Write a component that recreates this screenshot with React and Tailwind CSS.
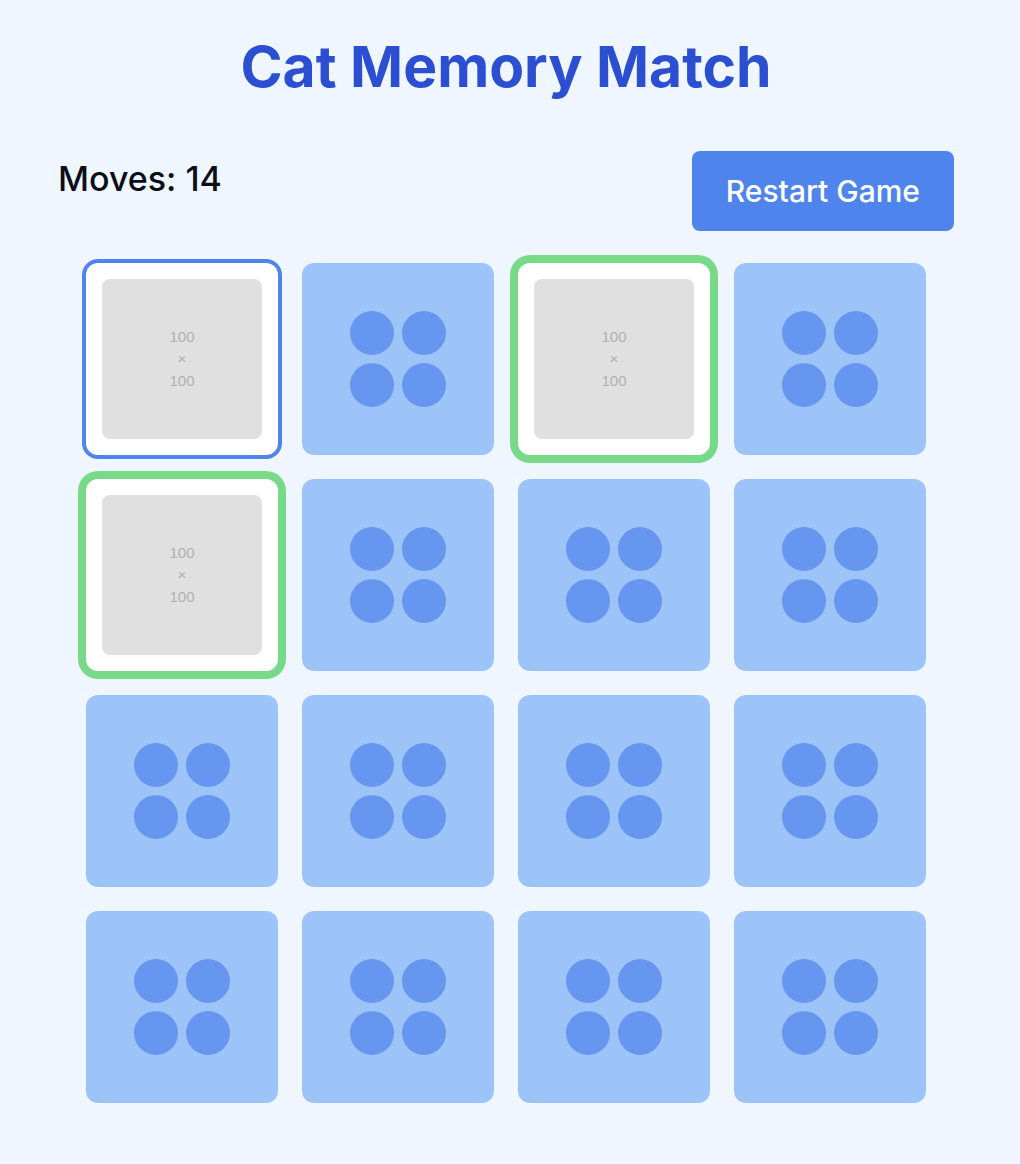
import React from 'react'

const cards = [
  'selected', 'hidden', 'matched', 'hidden',
  'matched', 'hidden', 'hidden', 'hidden',
  'hidden', 'hidden', 'hidden', 'hidden',
  'hidden', 'hidden', 'hidden', 'hidden',
]

function CardBack() {
  return (
    <div className="w-48 h-48 rounded-xl bg-[#9dc4f8] flex items-center justify-center">
      <div className="grid grid-cols-2 gap-2">
        {[0, 1, 2, 3].map((i) => (
          <div key={i} className="w-11 h-11 rounded-full bg-[#6696f0]"></div>
        ))}
      </div>
    </div>
  )
}

function CardFront({ state }) {
  const ring = state === 'matched' ? 'ring-8 ring-[#78da88]' : 'ring-4 ring-[#4f84ec]'
  return (
    <div className={'w-48 h-48 rounded-xl bg-white p-4 ' + ring}>
      <div className="w-40 h-40 rounded-lg bg-[#e0e0e0] flex flex-col items-center justify-center text-[15px] leading-[22px] text-[#b0b0b0] font-['Liberation_Sans',sans-serif]">
        <span>100</span>
        <span>×</span>
        <span>100</span>
      </div>
    </div>
  )
}

export default function App() {
  return (
    <div className="min-h-screen bg-[#eff6ff] pr-2 font-['Inter',sans-serif]">
      <div className="mx-auto max-w-[896px] pt-[31px] pb-12">
        <h1 className="text-center text-[57px] leading-[72px] font-bold text-[#2c4fd2] mb-[48px]">
          Cat Memory Match
        </h1>

        {/* moves + restart */}
        <div className="flex items-start justify-between mb-8">
          <div className="text-[34px] leading-[56px] font-medium text-[#0b0d17]">Moves: 14</div>
          <button className="h-20 px-[34px] rounded-lg bg-[#4f84ec] text-white text-[30px] font-medium">
            Restart Game
          </button>
        </div>

        {/* board */}
        <div className="grid grid-cols-[repeat(4,192px)] gap-6 justify-center">
          {cards.map((s, i) =>
            s === 'hidden' ? <CardBack key={i} /> : <CardFront key={i} state={s} />
          )}
        </div>
      </div>
    </div>
  )
}
